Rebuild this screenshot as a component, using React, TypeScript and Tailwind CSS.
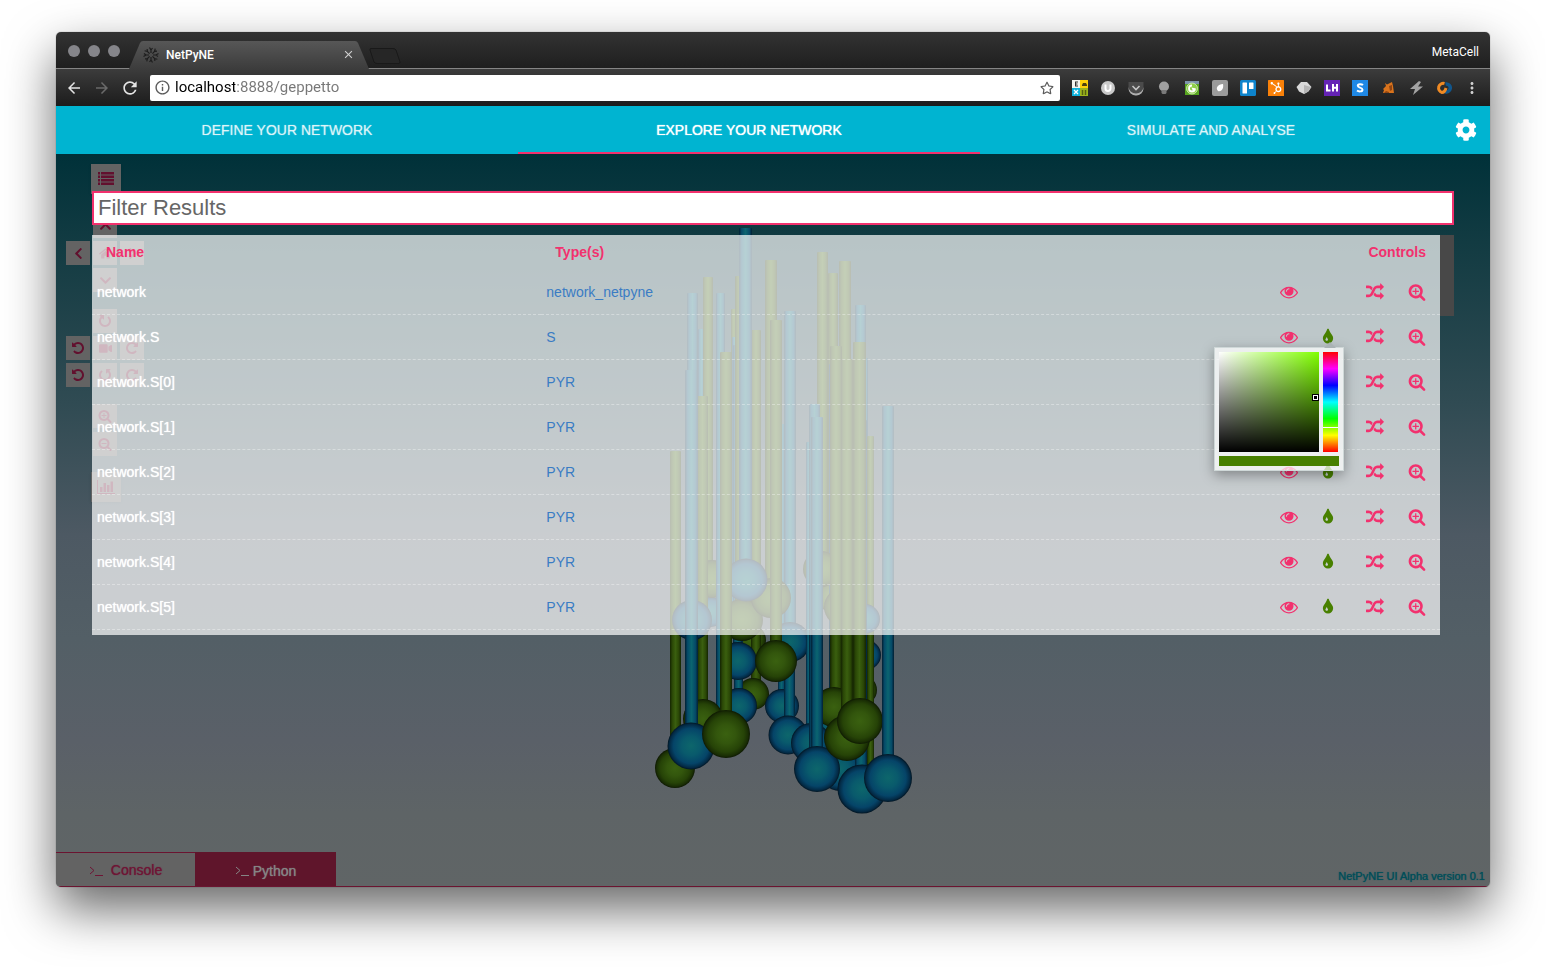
import React, { useState } from "react";
import {
  FaChevronDown,
  FaChevronLeft,
  FaChevronRight,
  FaChevronUp,
  FaCog,
  FaHome,
  FaHubspot,
  FaRegStar,
  FaVideo,
} from "react-icons/fa";
import { MdArrowBack, MdArrowForward, MdClose, MdMoreVert, MdRefresh, MdInfoOutline } from "react-icons/md";

const LENS =
  "M1216 832q0-185-131.5-316.5t-316.5-131.5-316.5 131.5-131.5 316.5 131.5 316.5 316.5 131.5 316.5-131.5 131.5-316.5zm512 832q0 53-37.5 90.5t-90.5 37.5q-54 0-90-38l-343-342q-179 124-399 124-143 0-273.5-55.5t-225-150-150-225-55.5-273.5 55.5-273.5 150-225 225-150 273.5-55.5 273.5 55.5 225 150 150 225 55.5 273.5q0 220-124 399l343 343q37 37 37 90z";

const PATHS = {
  eye: "M1664 960q-152-236-381-353 61 104 61 225 0 185-131.5 316.5t-316.5 131.5-316.5-131.5-131.5-316.5q0-121 61-225-229 117-381 353 133 205 333.5 326.5t434.5 121.5 434.5-121.5 333.5-326.5zm-720-384q0-20-14-34t-34-14q-125 0-214.5 89.5t-89.5 214.5q0 20 14 34t34 14 34-14 14-34q0-86 61-147t147-61q20 0 34-14t14-34zm848 384q0 34-20 69-140 230-376.5 368.5t-499.5 138.5-499.5-139-376.5-368q-20-35-20-69t20-69q140-229 376.5-368t499.5-139 499.5 139 376.5 368q20 35 20 69z",
  tint: "M896 1152q0-36-20-69-1-1-15.5-22.5t-25.5-38-25-44-21-50.5q-4-16-21-16t-21 16q-7 23-21 50.5t-25 44-25.5 38-15.5 22.5q-20 33-20 69 0 53 37.5 90.5t90.5 37.5 90.5-37.5 37.5-90.5zm512-128q0 212-150 362t-362 150-362-150-150-362q0-145 81-275 6-9 62.5-90.5t101-151 99.5-178 83-201.5q9-30 34-47t51-17 51.5 17 33.5 47q28 93 83 201.5t99.5 178 101 151 62.5 90.5q81 127 81 275z",
  random:
    "M666 481q-60 92-137 273-22-45-37-72.5t-40.5-63.5-51-56.5-63-35-81.5-14.5h-224q-14 0-23-9t-9-23v-192q0-14 9-23t23-9h224q250 0 410 225zm1126 799q0 14-9 23l-320 320q-9 9-23 9-13 0-22.5-9.5t-9.5-22.5v-192q-32 0-85 .5t-81 1-73-1-71-5-64-10.5-63-18.5-58-28.5-59-40-55-53.5-56-69.5q59-93 136-273 22 45 37 72.5t40.5 63.5 51 56.5 63 35 81.5 14.5h256v-192q0-14 9-23t23-9q12 0 24 10l319 319q9 9 9 23zm0-896q0 14-9 23l-320 320q-9 9-23 9-13 0-22.5-9.5t-9.5-22.5v-192h-256q-48 0-87 15t-69 45-51 61.5-45 77.5q-32 62-78 171-29 66-49.5 111t-54 105-64 100-74 83-90 68.5-106.5 42-128 16.5h-224q-14 0-23-9t-9-23v-192q0-14 9-23t23-9h224q48 0 87-15t69-45 51-61.5 45-77.5q32-62 78-171 29-66 49.5-111t54-105 64-100 74-83 90-68.5 106.5-42 128-16.5h256v-192q0-14 9-23t23-9q12 0 24 10l319 319q9 9 9 23z",
  zoomIn:
    "M1088 800v64q0 13-9.5 22.5t-22.5 9.5h-224v224q0 13-9.5 22.5t-22.5 9.5h-64q-13 0-22.5-9.5t-9.5-22.5v-224h-224q-13 0-22.5-9.5t-9.5-22.5v-64q0-13 9.5-22.5t22.5-9.5h224v-224q0-13 9.5-22.5t22.5-9.5h64q13 0 22.5 9.5t9.5 22.5v224h224q13 0 22.5 9.5t9.5 22.5z" +
    LENS,
  zoomOut:
    "M1088 800v64q0 13-9.5 22.5t-22.5 9.5h-576q-13 0-22.5-9.5t-9.5-22.5v-64q0-13 9.5-22.5t22.5-9.5h576q13 0 22.5 9.5t9.5 22.5z" +
    LENS,
  undo: "M1664 896q0 156-61 298t-164 245-245 164-298 61q-172 0-327-72.5t-264-204.5q-7-10-6.5-22.5t8.5-20.5l137-138q10-9 25-9 16 2 23 12 73 95 179 147t225 52q104 0 198.5-40.5t163.5-109.5 109.5-163.5 40.5-198.5-40.5-198.5-109.5-163.5-163.5-109.5-198.5-40.5q-98 0-188 35.5t-160 101.5l137 138q31 30 14 69-17 40-59 40h-448q-26 0-45-19t-19-45v-448q0-42 40-59 39-17 69 14l130 129q107-101 244.5-156.5t284.5-55.5q156 0 298 61t245 164 164 245 61 298z",
};

function Icon({ name, className = "" }: { name: keyof typeof PATHS; className?: string }) {
  return (
    <svg viewBox="0 0 1792 1792" fill="currentColor" fillRule="evenodd" aria-hidden="true" className={className}>
      <path d={PATHS[name]} />
    </svg>
  );
}

type Cell = { hue: "b" | "g"; x: number; w: number; top: number; cx: number; cy: number; r: number };

// Cells ordered from the farthest to the nearest one.
const CELLS: Cell[] = [
  { hue: "g", x: 731, w: 6, top: 309, cx: 750, cy: 640, r: 16 },
  { hue: "b", x: 698, w: 7, top: 329, cx: 711, cy: 612, r: 15 },
  { hue: "b", x: 732, w: 5, top: 337, cx: 738, cy: 606, r: 14 },
  { hue: "b", x: 862, w: 6, top: 358, cx: 866, cy: 655, r: 15 },
  { hue: "g", x: 863, w: 5, top: 450, cx: 862, cy: 690, r: 15 },
  { hue: "g", x: 867, w: 7, top: 436, cx: 866, cy: 780, r: 16 },
  { hue: "g", x: 828, w: 10, top: 273, cx: 832, cy: 597, r: 15 },
  { hue: "b", x: 829, w: 9, top: 364, cx: 831, cy: 725, r: 18 },
  { hue: "b", x: 855, w: 11, top: 305, cx: 865, cy: 619, r: 15 },
  { hue: "g", x: 817, w: 11, top: 252, cx: 821, cy: 569, r: 18 },
  { hue: "g", x: 751, w: 10, top: 330, cx: 753, cy: 694, r: 16 },
  { hue: "b", x: 778, w: 7, top: 424, cx: 782, cy: 706, r: 17 },
  { hue: "b", x: 734, w: 9, top: 420, cx: 739, cy: 706, r: 18 },
  { hue: "b", x: 733, w: 9, top: 345, cx: 738, cy: 661, r: 19 },
  { hue: "g", x: 703, w: 10, top: 277, cx: 712, cy: 579, r: 19 },
  { hue: "g", x: 735, w: 10, top: 276, cx: 742, cy: 620, r: 21 },
  { hue: "b", x: 784, w: 11, top: 400, cx: 788, cy: 735, r: 19.5 },
  { hue: "b", x: 784, w: 12, top: 311, cx: 790, cy: 642, r: 20 },
  { hue: "g", x: 765, w: 12, top: 260, cx: 771, cy: 598, r: 20 },
  { hue: "b", x: 739, w: 13, top: 228, cx: 746, cy: 580, r: 21.5 },
  { hue: "b", x: 716, w: 9, top: 293, cx: 718, cy: 726, r: 18 },
  { hue: "g", x: 770, w: 12, top: 320, cx: 776, cy: 661, r: 21 },
  { hue: "g", x: 839, w: 12, top: 261, cx: 843, cy: 607, r: 19 },
  { hue: "g", x: 670, w: 11, top: 451, cx: 675, cy: 768, r: 20 },
  { hue: "g", x: 697, w: 11, top: 396, cx: 703, cy: 719, r: 20 },
  { hue: "b", x: 687, w: 11, top: 293, cx: 692, cy: 620, r: 20 },
  { hue: "b", x: 806, w: 6, top: 442, cx: 811, cy: 743, r: 20 },
  { hue: "b", x: 809, w: 11, top: 404, cx: 840, cy: 769, r: 22 },
  { hue: "g", x: 830, w: 12, top: 346, cx: 834, cy: 707, r: 20 },
  { hue: "b", x: 685, w: 13, top: 370, cx: 691, cy: 746, r: 23.5 },
  { hue: "g", x: 720, w: 12, top: 352, cx: 726, cy: 734, r: 24 },
  { hue: "b", x: 811, w: 12, top: 417, cx: 817, cy: 769, r: 23 },
  { hue: "b", x: 855, w: 12, top: 420, cx: 862, cy: 789, r: 24.5 },
  { hue: "g", x: 841, w: 12, top: 359, cx: 847, cy: 738, r: 23 },
  { hue: "g", x: 853, w: 13, top: 342, cx: 860, cy: 721, r: 23 },
  { hue: "b", x: 882, w: 12, top: 406, cx: 888, cy: 778, r: 24 },
];

function NetworkScene() {
  return (
    <svg viewBox="56 154 1434 733" className="absolute inset-0 size-full" role="img" aria-label="3D network">
      <defs>
        <radialGradient id="ball-b">
          <stop offset="0" stopColor="#0d666b" />
          <stop offset="0.4" stopColor="#095a6c" />
          <stop offset="0.75" stopColor="#054468" />
          <stop offset="0.92" stopColor="#032a45" />
          <stop offset="1" stopColor="#021522" />
        </radialGradient>
        <radialGradient id="ball-g">
          <stop offset="0" stopColor="#3a6110" />
          <stop offset="0.4" stopColor="#33560d" />
          <stop offset="0.75" stopColor="#264307" />
          <stop offset="0.92" stopColor="#192d04" />
          <stop offset="1" stopColor="#0d1802" />
        </radialGradient>
        <linearGradient id="rod-b">
          <stop offset="0" stopColor="#021f33" />
          <stop offset="0.2" stopColor="#054a68" />
          <stop offset="0.5" stopColor="#0b6570" />
          <stop offset="0.8" stopColor="#054a68" />
          <stop offset="1" stopColor="#021f33" />
        </linearGradient>
        <linearGradient id="rod-g">
          <stop offset="0" stopColor="#142402" />
          <stop offset="0.2" stopColor="#2a4706" />
          <stop offset="0.5" stopColor="#3a5f0f" />
          <stop offset="0.8" stopColor="#2a4706" />
          <stop offset="1" stopColor="#142402" />
        </linearGradient>
      </defs>
      {CELLS.map((c, i) => (
        <g key={i}>
          <rect
            x={c.x}
            y={c.top}
            width={c.w}
            height={c.cy - c.r + 4 - c.top}
            rx="1"
            fill={c.hue === "b" ? "url(#rod-b)" : "url(#rod-g)"}
          />
          <circle cx={c.cx} cy={c.cy} r={c.r} fill={c.hue === "b" ? "url(#ball-b)" : "url(#ball-g)"} />
        </g>
      ))}
    </svg>
  );
}

const EXTENSIONS: { label: string; art: React.ReactNode }[] = [
  {
    label: "Extension tiles",
    art: (
      <>
        <path d="M0 0h8v8H0z" fill="#f4f4f0" />
        <path d="M8 0h8v8H8z" fill="#fdd20a" />
        <path d="M0 8h8v8H0z" fill="#0fb3dc" />
        <path d="M8 8h8v8H8z" fill="#9db51c" />
        <path d="M3 2h3M3 4h2.500M3 6h3M3.500 2v4" stroke="#333" fill="none" />
        <path d="M10 5l1-2h3l1 2v1h-5z" fill="#4d4210" />
        <path d="M2 10l4 4M6 10l-4 4" stroke="#fff" strokeWidth="1.300" />
        <path d="M10.500 10v5M13.500 10v5" stroke="#545f12" strokeWidth="1.500" />
      </>
    ),
  },
  {
    label: "Shield",
    art: (
      <>
        <circle cx="8" cy="8" r="7" fill="#c9c9c9" />
        <path d="M5.500 4.500v4a2.500 2.500 0 005 0v-4" stroke="#fff" strokeWidth="2" fill="none" />
      </>
    ),
  },
  {
    label: "Pocket",
    art: (
      <>
        <path d="M0.500 2h15v6a7.500 7.500 0 01-15 0z" fill="#4b4b4b" />
        <path d="M0.500 7a7.500 6.500 0 0015 0v1.500a7.500 7 0 01-15 0z" fill="#b0b0b0" />
        <path d="M4.500 6L8 9.500 11.500 6" stroke="#c4c4c4" strokeWidth="1.600" fill="none" />
      </>
    ),
  },
  {
    label: "Lamp",
    art: (
      <>
        <circle cx="8" cy="6.500" r="5" fill="#a0a0a0" />
        <path d="M5.500 10h5v3l-1 1h-3l-1-1z" fill="#7a7a7a" />
      </>
    ),
  },
  {
    label: "Refresh page",
    art: (
      <>
        <path d="M1 1h14v14H1z" fill="#57a51f" />
        <path d="M1 1h14v3H1z" fill="#7d93ab" />
        <circle cx="8" cy="8.500" r="5.500" fill="#8fcf4a" stroke="#d7edc0" strokeWidth="0.800" />
        <path d="M11 8.500A3 3 0 118 5.500" stroke="#fff" strokeWidth="1.800" fill="none" />
        <path d="M7.500 7.500l4 1L9 11z" fill="#fff" />
      </>
    ),
  },
  {
    label: "Leaf",
    art: (
      <>
        <rect width="16" height="16" rx="2" fill="#9b9b9b" />
        <path d="M11 4c1 5-2 8-5 7-3-3 0-7 5-7z" fill="#fff" />
      </>
    ),
  },
  {
    label: "Boards",
    art: (
      <>
        <rect width="16" height="16" rx="1.500" fill="#0e84cc" />
        <rect x="2.500" y="2.500" width="4.500" height="11" rx="0.500" fill="#fff" />
        <rect x="9" y="2.500" width="4.500" height="6.500" rx="0.500" fill="#fff" />
      </>
    ),
  },
  {
    label: "HubSpot",
    art: (
      <>
        <rect width="16" height="16" rx="0.500" fill="#f98109" />
        <FaHubspot x="2" y="2" size={12} color="#fff" />
      </>
    ),
  },
  {
    label: "Gem",
    art: (
      <>
        <path d="M0.500 7L5 2h6l4.500 5-3 4.500L8 14l-5-2.500z" fill="#d9d9d9" />
        <path d="M8 5l7 2-3 4.500L8 14z" fill="#b5b5b5" />
      </>
    ),
  },
  {
    label: "LH",
    art: (
      <>
        <path d="M0 0h16v16H0z" fill="#6423b5" />
        <path d="M3 4.500v6h3.500M9 4v7.500M13 4v7.500M9 7.800h4" stroke="#fff" strokeWidth="2" fill="none" />
      </>
    ),
  },
  {
    label: "S",
    art: (
      <>
        <path d="M0 0h16v16H0z" fill="#1f88e5" />
        <path
          d="M11 5C9.500 3.800 5.800 3.700 5.800 5.800 5.800 8 10.500 7.200 10.500 9.700c0 2.200-4 2-5.500.8"
          stroke="#fff"
          strokeWidth="2"
          fill="none"
        />
      </>
    ),
  },
  {
    label: "Fox",
    art: (
      <>
        <path d="M5 3l2 1.500L12 2l1 4 1 7H3l1-3-1-1 3-3z" fill="#d9731c" />
        <path d="M9 6l3-1v5l-2 1zM6 11l3 1v1H4z" fill="#8f4512" />
      </>
    ),
  },
  { label: "Bolt", art: <path d="M11 1L2 9h5l-2 6 10-8.500h-5L13 2z" fill="#a3a3a3" /> },
  {
    label: "Swirl",
    art: (
      <>
        <path d="M9.500 4a4 4 0 11-1 7.500" stroke="#11568c" strokeWidth="3.500" fill="none" />
        <path d="M8.500 3.500A4.500 4.500 0 106 12.500c3 0 3.500-3 4-4.500" stroke="#ef8a24" strokeWidth="3" fill="none" />
      </>
    ),
  },
];

function BrowserChrome() {
  return (
    <header className="font-[Roboto,sans-serif] text-white">
      <div className="flex h-9 items-center justify-between bg-linear-to-b from-[#333333] to-[#1f1f1f] pr-[11px]">
        <div className="flex h-full items-end">
          <div className="flex gap-2 self-center pt-[2px] pr-[9px] pl-3">
            <button aria-label="Close window" className="size-3 rounded-full bg-[#85858a]" />
            <button aria-label="Minimize window" className="size-3 rounded-full bg-[#85858a]" />
            <button aria-label="Zoom window" className="size-3 rounded-full bg-[#85858a]" />
          </div>
          <div className="relative flex h-[27px] w-60 items-center px-[14px]">
            <svg viewBox="0 0 240 28" preserveAspectRatio="none" className="absolute inset-x-0 top-0 h-7 w-full" aria-hidden="true">
              <defs>
                <linearGradient id="tab" x2="0" y2="1">
                  <stop offset="0" stopColor="#575757" />
                  <stop offset="1" stopColor="#3c3c3c" />
                </linearGradient>
              </defs>
              <path d="M0 28L11 2Q12 0 14 0H226Q228 0 229 2L240 28z" fill="url(#tab)" />
            </svg>
            <svg viewBox="-8 -8 16 16" className="relative size-4" stroke="#1d1d1d" strokeWidth="1.200" fill="none" aria-hidden="true">
              {[0, 45, 90, 135, 180, 225, 270, 315].map((a) => (
                <path key={a} d="M0 -2V-5L-1.500 -7.500M0 -5L1.500 -7" transform={`rotate(${a})`} />
              ))}
            </svg>
            <span className="relative flex-1 pl-[7px] text-[12px] font-medium">NetPyNE</span>
            <button aria-label="Close tab" className="relative text-[#d0d0d0]">
              <MdClose size={13} />
            </button>
          </div>
          <button aria-label="New tab" className="mb-1">
            <svg viewBox="0 0 32 16" className="h-4 w-8" fill="#262626" stroke="#191919">
              <path d="M1 2Q0.500 0.500 2 0.500H24Q26 0.500 27 2L31 14Q31 15.500 30 15.500H8Q6 15.500 5 14z" />
            </svg>
          </button>
        </div>
        <span className="pt-1 text-[12px]">MetaCell</span>
      </div>
      <div className="flex h-[38px] items-center gap-3 border-t border-[#858585] bg-linear-to-b from-[#3c3c3c] to-[#1c1c1c] px-[10px]">
        <button aria-label="Back" className="text-[#e4e4e4]">
          <MdArrowBack className="-m-px size-[18px]" />
        </button>
        <button aria-label="Forward" className="text-[#6a6a6a]">
          <MdArrowForward className="-m-px size-[18px]" />
        </button>
        <button aria-label="Reload" className="text-[#e4e4e4]">
          <MdRefresh className="-m-[2px] size-5" />
        </button>
        <div className="flex h-[26px] flex-1 items-center rounded-[2px] bg-white pr-[6px] pl-1 text-[#5b5b5b]">
          <MdInfoOutline size={17} />
          <input
            aria-label="Address"
            defaultValue="localhost:8888/geppetto"
            className="ml-1 flex-1 bg-[linear-gradient(90deg,#000_60px,#777_60px)] bg-clip-text text-[15px] text-transparent outline-none"
          />
          <FaRegStar size={14} />
        </div>
        {EXTENSIONS.map((e) => (
          <button key={e.label} aria-label={e.label}>
            <svg viewBox="0 0 16 16" className="size-4">
              {e.art}
            </svg>
          </button>
        ))}
        <button aria-label="Menu" className="text-[#cfcfcf]">
          <MdMoreVert className="-m-px size-[18px]" />
        </button>
      </div>
    </header>
  );
}

function Pad({ label, at = "", children }: { label: string; at?: string; children: React.ReactNode }) {
  return (
    <button aria-label={label} className={`flex size-6 items-center justify-center bg-[#636363] text-[#62102e] ${at}`}>
      {children}
    </button>
  );
}

function CanvasControls() {
  return (
    <div className="absolute top-[10px] left-[10px] flex flex-col text-[13px]">
      <button
        aria-label="Control panel"
        className="ml-[25px] flex size-[30px] items-center justify-center bg-[#636363] pb-[2px] text-[#62102e] shadow-sm"
      >
        <svg viewBox="0 0 16 13" className="h-[13px] w-4" fill="currentColor">
          <path d="M0 0h2v2.500H0zM3 0h13v2.500H3zM0 3.500h2V6H0zM3 3.500h13V6H3zM0 7h2v2.500H0zM3 7h13v2.500H3zM0 10.500h2V13H0zM3 10.500h13V13H3z" />
        </svg>
      </button>
      <div className="mt-5 grid grid-cols-[24px_24px_24px] gap-[3px]">
        <Pad label="Pan up" at="col-start-2">
          <FaChevronUp />
        </Pad>
        <Pad label="Pan left" at="col-start-1">
          <FaChevronLeft />
        </Pad>
        <Pad label="Home">
          <FaHome />
        </Pad>
        <Pad label="Pan right">
          <FaChevronRight />
        </Pad>
        <Pad label="Pan down" at="col-start-2">
          <FaChevronDown />
        </Pad>
      </div>
      <div className="mt-[17px] grid grid-cols-[24px_24px_24px] gap-[3px]">
        <Pad label="Rotate up" at="col-start-2">
          <Icon name="undo" className="size-[14px] -rotate-90 -scale-x-100" />
        </Pad>
        <Pad label="Rotate left" at="col-start-1">
          <Icon name="undo" className="size-[14px]" />
        </Pad>
        <Pad label="Rotate home">
          <FaVideo />
        </Pad>
        <Pad label="Rotate right">
          <Icon name="undo" className="size-[14px] -scale-x-100" />
        </Pad>
        <Pad label="Roll left">
          <Icon name="undo" className="size-[14px]" />
        </Pad>
        <Pad label="Rotate down">
          <Icon name="undo" className="size-[14px] rotate-90" />
        </Pad>
        <Pad label="Roll right">
          <Icon name="undo" className="size-[14px] -scale-x-100" />
        </Pad>
      </div>
      <div className="mt-[17px] flex w-[78px] flex-col items-center gap-1">
        <Pad label="Zoom in">
          <Icon name="zoomIn" className="size-[14px]" />
        </Pad>
        <Pad label="Zoom out">
          <Icon name="zoomOut" className="size-[14px]" />
        </Pad>
      </div>
      <button
        aria-label="Plots"
        className="mt-4 ml-[25px] flex size-[30px] items-center justify-center bg-[#636363] text-[#62102e] shadow-sm"
      >
        <svg viewBox="0 0 18 14" className="h-[14px] w-[18px]" fill="currentColor">
          <path d="M0 0h1v13h17v1H0zM3 7h2.500v5H3zM6.500 3H9v9H6.500zM10 5h2.500v7H10zM13.500 1.500H16V12h-2.500z" />
        </svg>
      </button>
    </div>
  );
}

function ColorPicker() {
  return (
    <div className="absolute top-[19px] -left-[105px] z-10 flex w-[130px] flex-col gap-1 border border-[#cfd8d8] bg-white/70 p-1 shadow-[0_4px_12px_rgba(0,0,0,0.35)]">
      <div className="absolute -top-[6px] left-[109px] size-0 border-x-[6px] border-b-[6px] border-x-transparent border-b-[#a9b2b4]" />
      <div className="flex gap-1">
        <div className="relative size-[100px] bg-[linear-gradient(to_top,#000,transparent),linear-gradient(to_right,#fff,#80ff00)]">
          <div className="absolute top-[43px] left-[94px] size-[5px] border border-white bg-black outline outline-black" />
        </div>
        <div className="relative h-[100px] w-[15px] bg-[linear-gradient(to_bottom,#f00,#f0f,#00f,#0ff,#0f0,#ff0,#f00)]">
          <div className="absolute top-[75px] h-px w-full bg-white" />
        </div>
      </div>
      <div className="h-[10px] bg-[#488000]" />
    </div>
  );
}

const ROWS = [
  { path: "network", type: "network_netpyne", tint: false },
  { path: "network.S", type: "S", tint: true },
  { path: "network.S[0]", type: "PYR", tint: true },
  { path: "network.S[1]", type: "PYR", tint: true },
  { path: "network.S[2]", type: "PYR", tint: true },
  { path: "network.S[3]", type: "PYR", tint: true },
  { path: "network.S[4]", type: "PYR", tint: true },
  { path: "network.S[5]", type: "PYR", tint: true },
];

function ControlPanel() {
  const [picking] = useState("network.S");
  return (
    <div className="relative pt-[37px] pr-9 pl-9">
      <input
        aria-label="Filter Results"
        placeholder="Filter Results"
        className="block h-[34px] w-full border-2 border-[#f2316e] bg-white px-1 text-[22px] leading-7 outline-none placeholder:text-[#666]"
      />
      <div className="mt-[10px] flex items-start">
        <div className="flex-1 bg-white/70 pb-[5px]">
          <table className="w-full table-fixed border-collapse text-left text-[14px]">
            <thead className="text-[#f2316e]">
              <tr className="h-[34px]">
                <th className="pl-[14px]">Name</th>
                <th className="pl-[14px]">Type(s)</th>
                <th className="pr-[14px] text-right">Controls</th>
              </tr>
            </thead>
            <tbody>
              {ROWS.map((r) => (
                <tr key={r.path} className="h-[45px] border-b border-dashed border-white/35">
                  <td className="pt-[2px] pl-[5px] text-white [text-shadow:0_0_1px_#fff]">{r.path}</td>
                  <td className="pt-[2px] pl-[5px] text-[#3a7cc4]">{r.type}</td>
                  <td className="pt-px pr-[14px]">
                    <div className="grid grid-cols-[39px_47px_42px_18px] justify-end text-[#f2316e]">
                      <button aria-label={`Toggle visibility of ${r.path}`} className="w-fit">
                        <Icon name="eye" className="size-[18px]" />
                      </button>
                      <div className="relative">
                        {r.tint && (
                          <button aria-label={`Color of ${r.path}`} className="block w-fit text-[#488000]">
                            <Icon name="tint" className="size-[18px]" />
                          </button>
                        )}
                        {r.path === picking && <ColorPicker />}
                      </div>
                      <button aria-label={`Random color for ${r.path}`} className="w-fit">
                        <Icon name="random" className="size-[18px]" />
                      </button>
                      <button aria-label={`Zoom to ${r.path}`} className="w-fit">
                        <Icon name="zoomIn" className="size-[18px]" />
                      </button>
                    </div>
                  </td>
                </tr>
              ))}
            </tbody>
          </table>
        </div>
        <div className="h-[81px] w-[14px] bg-[#484848]" />
      </div>
    </div>
  );
}

function PromptIcon() {
  return (
    <svg viewBox="0 0 14 10" className="h-[10px] w-[14px]" fill="none" stroke="currentColor" aria-hidden="true">
      <path d="M1 1l4 3.500L1 8M6 9.500h8" />
    </svg>
  );
}

function Footer() {
  return (
    <footer className="relative flex h-[35px] items-stretch border-b border-[#6b1430] text-[14px]">
      <button className="flex w-[139px] items-center justify-center gap-2 border-t border-[#6b1430] bg-[#636363] pt-[2px] text-[#6e1535] [text-shadow:0_0_1px_#6e1535]">
        <PromptIcon />
        Console
      </button>
      <button className="flex w-[141px] items-center justify-center gap-1 bg-[#5f152b] pt-1 text-[#858585] [text-shadow:0_0_1px_#858585]">
        <PromptIcon />
        Python
      </button>
      <span className="ml-auto self-end pr-[5px] pb-[3px] text-[11px] leading-[13px] text-[#004e59] [text-shadow:0_0_1px_#004e59]">
        NetPyNE UI Alpha version 0.1
      </span>
    </footer>
  );
}

export default function App() {
  return (
    <div className="flex min-h-screen flex-col bg-white px-14 pt-8 pb-20 font-['Liberation_Sans',Arial,sans-serif]">
      <div className="flex flex-1 flex-col overflow-hidden rounded-[5px] shadow-[0_0_1px_rgba(0,0,0,0.6),0_22px_50px_rgba(0,0,0,0.6)]">
        <BrowserChrome />
        <nav className="flex h-12 bg-[#00b4d1] text-[14px] text-white/70 [text-shadow:0_0_1px_currentColor]">
          <a href="#define" className="flex flex-1 items-center justify-center">
            DEFINE YOUR NETWORK
          </a>
          <a
            href="#explore"
            className="flex flex-1 items-center justify-center border-b-2 border-[#f2316e] pt-[2px] text-white [text-shadow:0_0_1px_#fff]"
          >
            EXPLORE YOUR NETWORK
          </a>
          <a href="#simulate" className="flex flex-1 items-center justify-center">
            SIMULATE AND ANALYSE
          </a>
          <button aria-label="Settings" className="flex w-12 items-center justify-center text-white">
            <FaCog size={22} />
          </button>
        </nav>
        <main className="relative flex flex-1 flex-col justify-between bg-[linear-gradient(to_bottom,#003139_0%,#123b42_12%,#304b53_34%,#4d5963_52%,#535f66_66%,#5a6068_80%,#5e6466_90%,#606566_100%)]">
          <NetworkScene />
          <CanvasControls />
          <ControlPanel />
          <Footer />
        </main>
      </div>
    </div>
  );
}
